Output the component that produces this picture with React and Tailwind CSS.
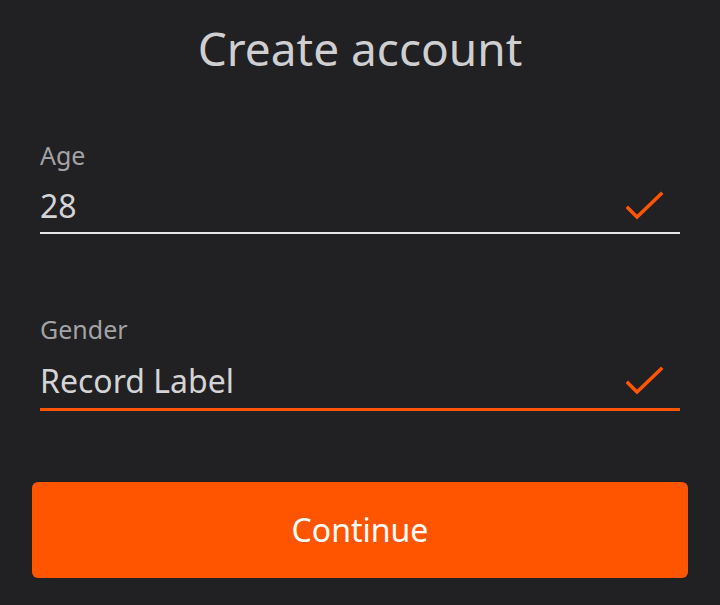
import React from "react";

function Check() {
  return (
    <svg width="38" height="30" viewBox="0 0 38 30" className="shrink-0">
      <path d="M2 13 L11 22 L35 -1" transform="translate(0,4)" fill="none" stroke="#ff5500" strokeWidth="3.5" strokeLinecap="square" />
    </svg>
  );
}

function Field({ label, value, lineClass, gapClass }) {
  return (
    <div className="px-10">
      <div className="text-[25px] leading-[30px] text-[#a3a3a6]">{label}</div>
      <div className={"flex items-center justify-between " + gapClass + " " + lineClass}>
        <span className="text-[32px] leading-[40px] text-[#d4d4d6]">{value}</span>
        <div className="mr-[16px]"><Check /></div>
      </div>
    </div>
  );
}

export default function App() {
  return (
    <div className="w-[720px] h-[605px] bg-[#212023] overflow-hidden" style={{ fontFamily: '"Noto Sans", sans-serif' }}>
      <h1 className="pt-[18px] text-center text-[46px] leading-[60px] text-[#cfcfd1]">Create account</h1>
      <div className="mt-[62px]">
        <Field label="Age" value="28" gapClass="mt-[16px] pb-[6px]" lineClass="border-b-2 border-[#e6e6e8]" />
      </div>
      <div className="mt-[80px]">
        <Field label="Gender" value="Record Label" gapClass="mt-[17px] pb-[7px]" lineClass="border-b-[3px] border-[#ff5500]" />
      </div>
      <div className="px-8 mt-[71px]">
        <button className="w-full h-[96px] rounded-[6px] bg-[#ff5500] text-white text-[32px]">Continue</button>
      </div>
    </div>
  );
}
